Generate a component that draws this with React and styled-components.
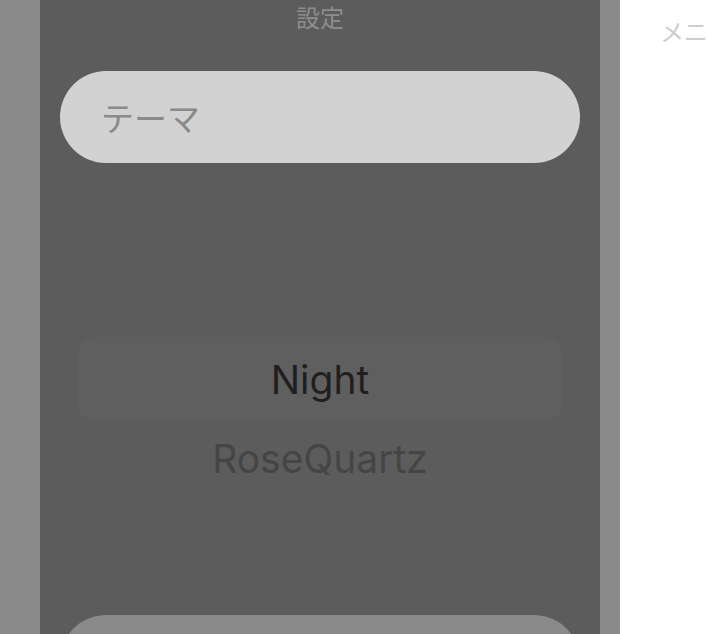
import React from 'react'
import styled, { createGlobalStyle } from 'styled-components'

const Global = createGlobalStyle`
  html, body { margin: 0; padding: 0; overflow: hidden; background: #fff; }
  body { font-family: Inter, "Noto Sans", "Noto Sans CJK JP", sans-serif; }
`

const Screen = styled.div`
  display: flex;
  width: 708px;
  height: 634px;
  overflow: hidden;
`

const Strip = styled.div`
  flex: 0 0 ${p => p.$w}px;
  background: #8a8a8a;
`

const Sheet = styled.div`
  flex: 0 0 560px;
  background: #5c5c5c;
  display: flex;
  flex-direction: column;
  padding: 0 20px;
  box-sizing: border-box;
  & > * { flex-shrink: 0; }
`

const Title = styled.div`
  height: 36px;
  font-family: "Noto Sans CJK JP", sans-serif;
  font-size: 24px;
  line-height: 36px;
  color: #8e8e8e;
  text-align: center;
  margin-top: -1px;
`

const Field = styled.div`
  margin-top: 36px;
  height: 92px;
  border-radius: 46px;
  background: #d2d2d2;
  display: flex;
  align-items: center;
  padding-left: 41px;
  font-family: "Noto Sans CJK JP", sans-serif;
  font-size: 33px;
  color: #8a8a8a;
`

const Picker = styled.div`
  display: flex;
  flex-direction: column;
  align-items: stretch;
  padding: 174px 18px 0;
  height: 278px;
`

const Option = styled.div`
  flex-shrink: 0;
  height: ${p => p.$selected ? 84 : 74}px;
  border-radius: 16px;
  background: ${p => p.$selected ? '#5f5f5f' : 'transparent'};
  display: flex;
  align-items: center;
  justify-content: center;
  font-size: 39px;
  color: ${p => p.$selected ? '#1f1f1f' : '#454545'};
`

const Button = styled.div`
  height: 92px;
  border-radius: 46px;
  background: #8a8a8a;
`

const Menu = styled.div`
  flex: 1 0 auto;
  background: #fff;
  padding-left: 40px;
  font-family: "Noto Sans CJK JP", sans-serif;
  font-size: 24px;
  line-height: 61px;
  color: #cdcdcd;
  white-space: nowrap;
  overflow: hidden;
`

export default function App() {
  return (
    <>
      <Global />
      <Screen>
        <Strip $w={40} />
        <Sheet>
          <Title>設定</Title>
          <Field>テーマ</Field>
          <Picker>
            <Option $selected>Night</Option>
            <Option>RoseQuartz</Option>
          </Picker>
          <Button />
        </Sheet>
        <Strip $w={20} />
        <Menu>メニュー</Menu>
      </Screen>
    </>
  )
}
